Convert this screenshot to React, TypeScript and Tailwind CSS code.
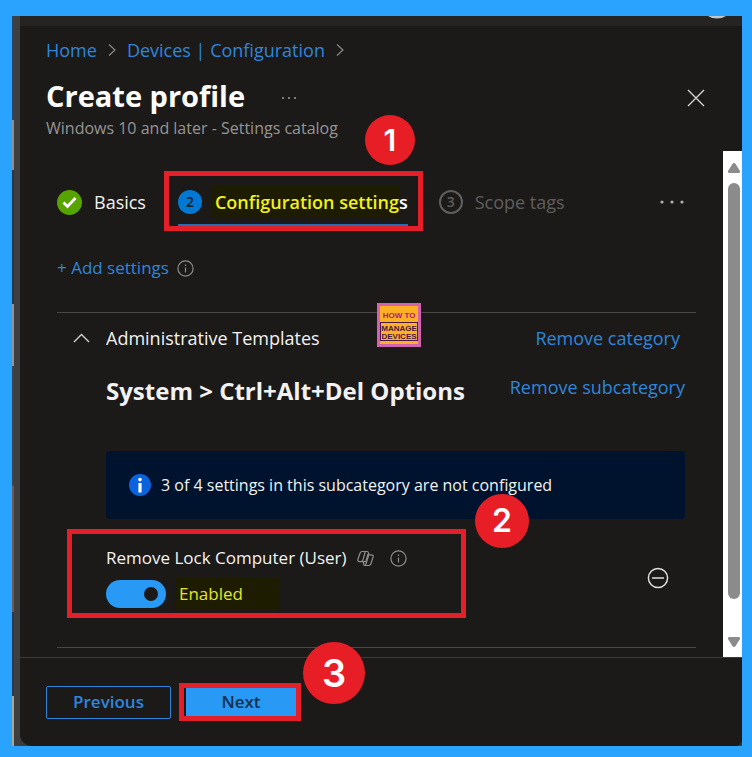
import { useState } from "react";
import type { ReactNode } from "react";

const linkClass = "text-[#2f86dc] hover:underline";

export default function App() {
	return (
		<div className="min-h-screen flex bg-[#2aa3ff] pl-3 pr-2.5 pt-4 pb-[11px] font-['Open_Sans','Noto_Sans',sans-serif] text-[#f3f2f1]">
			<div className="flex-1 min-w-0 flex bg-[#3c3c3c]">
				<DesktopEdge />
				<div className="flex-1 min-w-0 flex flex-col bg-[#1b1a19] rounded-bl-xl rounded-br-md overflow-hidden">
					<TopBar />
					<Header />
					<div className="flex-1 flex border-b border-[#3b3a39]">
						<main className="flex-1 min-w-0 pl-[37px] pr-[27px] pt-5 pb-2">
							<WizardSteps />
							<AddSettings />
							<CategorySection />
						</main>
						<ScrollTrack />
					</div>
					<Footer />
				</div>
			</div>
		</div>
	);
}

/* Sliver of the desktop behind the browser window */
function DesktopEdge() {
	return (
		<div className="w-2 flex" aria-hidden="true">
			<div className="w-0.5 flex flex-col">
				<div className="h-[104px] bg-[#27476a]" />
				<div className="h-[50px] bg-[#8b8f94]" />
				<div className="h-[134px] bg-[#27384c]" />
				<div className="h-[62px] bg-[#8f959a]" />
				<div className="h-[120px] bg-[#3a4652]" />
				<div className="h-[126px] bg-[#6b5a55]" />
				<div className="h-[84px] bg-[#263a56]" />
				<div className="flex-1 bg-[#a9a69c]" />
			</div>
			<div className="flex-1 bg-[#3f3f3f]" />
		</div>
	);
}

function TopBar() {
	return (
		<div className="h-2.5 bg-[#252423] flex justify-end pr-3.5">
			<svg width="22" height="3" viewBox="0 0 22 3" fill="#c3c7cb" aria-hidden="true">
				<path d="M2 0h18q-4 2.500-9 2.500T2 0z" />
			</svg>
		</div>
	);
}

function Header() {
	return (
		<header className="pl-[26px] pr-9 pt-3">
			<nav aria-label="Breadcrumb" className="flex items-center gap-2 h-6 text-[18px] leading-6">
				<a href="#home" className={linkClass}>
					Home
				</a>
				<Chevron />
				<a href="#configuration" className={linkClass}>
					Devices | Configuration
				</a>
				<Chevron />
			</nav>
			<div className="flex items-center pt-3.5">
				<h1 className="text-[29px] leading-10 font-bold text-white">Create profile</h1>
				<button type="button" aria-label="More actions" className="ml-9 mt-1">
					<svg width="16" height="4" viewBox="0 0 16 4" fill="#a19f9d">
						<circle cx="2" cy="2" r="1" />
						<circle cx="8" cy="2" r="1" />
						<circle cx="14" cy="2" r="1" />
					</svg>
				</button>
				<button type="button" aria-label="Close" className="ml-auto mt-1">
					<svg width="20" height="20" viewBox="0 0 20 20" fill="none" stroke="#d2d0ce" strokeWidth="1.4">
						<path d="M2 2l16 16M18 2L2 18" />
					</svg>
				</button>
			</div>
			<p className="h-[35px] text-[16px] leading-6 text-[#979593]">Windows 10 and later - Settings catalog</p>
		</header>
	);
}

function WizardSteps() {
	return (
		<div className="flex items-center pr-3 text-[18px] leading-7">
			<button type="button" className="flex items-center gap-3 pt-0.5">
				<svg width="25" height="25" viewBox="0 0 25 25" fill="none">
					<circle cx="12.5" cy="12.5" r="12.5" fill="#57a300" />
					<path d="M6.5 12.5l4 4 8-8.5" stroke="#fff" strokeWidth="2.8" />
				</svg>
				Basics
			</button>
			<div className="relative ml-[18px] border-5 border-[#e3202a] h-[60px] pl-[9px] pr-2.5 flex items-start">
				<button
					type="button"
					aria-current="step"
					className="h-[50px] pt-1 flex items-center gap-[9px] border-b-2 border-[#2a6bb5] whitespace-nowrap"
				>
					<span className="size-6 rounded-full bg-[#0078d4] text-[#14202c] text-[14px] font-semibold leading-6 text-center">
						2
					</span>
					<span className="font-semibold">
						<span className="bg-[#1d1c00] text-[#f1f11c] py-1 pl-1">Configuration setting</span>
						<span className="text-white">s</span>
					</span>
				</button>
				<StepBadge className="size-[50px] text-[30px] -top-[61px] left-[196px]">1</StepBadge>
			</div>
			<button type="button" className="ml-4 flex items-center gap-3 pt-0.5 text-[#605e5c] whitespace-nowrap">
				<span className="size-6 rounded-full border-2 border-[#605e5c] text-[14px] font-semibold leading-5 text-center">
					3
				</span>
				Scope tags
			</button>
			<button type="button" aria-label="More steps" className="ml-auto pt-0.5">
				<svg width="24" height="4" viewBox="0 0 24 4" fill="#b3b0ad">
					<circle cx="2" cy="2" r="1.6" />
					<circle cx="12" cy="2" r="1.6" />
					<circle cx="22" cy="2" r="1.6" />
				</svg>
			</button>
		</div>
	);
}

function AddSettings() {
	return (
		<div className="flex items-center gap-2 h-6 mt-[25px] text-[17px] leading-6">
			<button type="button" className={linkClass}>
				+ Add settings
			</button>
			<InfoIcon />
		</div>
	);
}

function CategorySection() {
	return (
		<section className="mt-8 border-y border-[#4a4846] relative">
			<div className="flex items-center h-[50px] pl-4 pr-4">
				<button type="button" className="flex items-center gap-4 text-[18px] leading-6">
					<svg width="17" height="10" viewBox="0 0 17 10" fill="none" stroke="#d2d0ce" strokeWidth="1.4">
						<path d="M1 9l7.5-7.5L16 9" />
					</svg>
					Administrative Templates
				</button>
				<button type="button" className={`${linkClass} ml-auto text-[18px] leading-6`}>
					Remove category
				</button>
			</div>
			<div className="pl-[49px] pr-[11px]">
				<div className="flex items-start justify-between pt-3">
					<h2 className="text-[24px] leading-8 font-bold whitespace-nowrap">System &gt; Ctrl+Alt+Del Options</h2>
					<button type="button" className={`${linkClass} text-[18px] leading-6 whitespace-nowrap`}>
						Remove subcategory
					</button>
				</div>
				<div className="mt-11 h-[68px] flex items-center gap-2.5 pl-[23px] rounded-sm bg-[#00132e] text-[16px] leading-6">
					<svg width="22" height="22" viewBox="0 0 22 22">
						<circle cx="11" cy="11" r="11" fill="#0a62dc" />
						<circle cx="11" cy="5.6" r="1.8" fill="#fff" />
						<path d="M9.4 9h3.2v9.5H9.4z" fill="#fff" />
					</svg>
					<span>3 of 4 settings in this subcategory are not configured</span>
				</div>
			</div>
			<SettingRow />
			<Logo />
		</section>
	);
}

function SettingRow() {
	const [enabled, setEnabled] = useState(true);

	return (
		<div className="mt-2.5 mb-[29px] pl-2.5 pr-[27px] flex items-center">
			<div className="relative flex-1 max-w-[399px] h-[89px] border-5 border-[#e3202a] pl-[34px] pt-3">
				<div className="flex items-center h-6 text-[17px] leading-6">
					<label htmlFor="remove-lock">Remove Lock Computer (User)</label>
					<span className="ml-2.5 mr-4">
						<CopilotIcon />
					</span>
					<InfoIcon />
				</div>
				<div className="flex items-center gap-[9px] mt-2">
					<input
						id="remove-lock"
						type="checkbox"
						role="switch"
						checked={enabled}
						onChange={(e) => setEnabled(e.target.checked)}
						className="appearance-none w-[60px] h-7 rounded-full bg-[#605e5c] checked:bg-[#2899f5] before:block before:size-3.5 before:rounded-full before:bg-[#1b1a19] before:mt-[7px] before:ml-2 checked:before:ml-[38px]"
					/>
					<span className="w-[104px] pl-1 bg-[#1d1c00] text-[#e6e626] text-[17px] leading-8">
						{enabled ? "Enabled" : "Disabled"}
					</span>
				</div>
				<StepBadge className="size-[54px] text-[32px] -top-10 left-[403px]">2</StepBadge>
			</div>
			<button type="button" aria-label="Remove setting" className="ml-auto mt-2">
				<svg width="22" height="22" viewBox="0 0 22 22" fill="none" stroke="#e1dfdd" strokeWidth="1.5">
					<circle cx="11" cy="11" r="9.6" />
					<path d="M5 11h12" />
				</svg>
			</button>
		</div>
	);
}

function Footer() {
	return (
		<footer className="flex items-center h-[88px] pl-[26px] gap-2 text-[17px] leading-6 font-semibold">
			<button type="button" className="w-[125px] h-[33px] border border-[#2f86dc] rounded-xs text-[#2f86dc]">
				Previous
			</button>
			<div className="relative border-5 border-[#e3202a] pl-0.5">
				<button type="button" className="block w-[110px] h-7 bg-[#2899f5] text-[#15304d]">
					Next
				</button>
				<StepBadge className="size-[62px] text-[38px] -top-[46px] left-[119px]">3</StepBadge>
			</div>
		</footer>
	);
}

function ScrollTrack() {
	return (
		<div className="w-[19px] bg-white flex flex-col items-center pl-0.5 pt-3 pb-2.5 gap-2.5" aria-hidden="true">
			<svg width="14" height="10" viewBox="0 0 14 10" fill="#8b8b8b">
				<path d="M7 0q1 0 1.600 1L13 8q.6 1.600-1 2H2Q.4 9.600 1 8l4.400-7Q6 0 7 0z" />
			</svg>
			<div className="w-3 flex-1 rounded-full bg-[#8b8b8b]" />
			<svg width="14" height="10" viewBox="0 0 14 10" fill="#8b8b8b" className="mt-7">
				<path d="M7 10q-1 0-1.600-1L1 2Q.4.4 2 0h10q1.600.4 1 2L8.600 9Q8 10 7 10z" />
			</svg>
		</div>
	);
}

function StepBadge({ className, children }: { className: string; children: ReactNode }) {
	return (
		<span
			className={`absolute z-10 flex items-center justify-center rounded-full bg-[#e81e26] text-white font-semibold font-['Inter','Liberation_Sans',sans-serif] ${className}`}
		>
			{children}
		</span>
	);
}

function Chevron() {
	return (
		<svg width="14" height="14" viewBox="0 0 14 14" fill="none" stroke="#8a8886" strokeWidth="1.2">
			<path d="M4 1.500l6 5.500-6 5.500" />
		</svg>
	);
}

function InfoIcon() {
	return (
		<svg width="17" height="17" viewBox="0 0 17 17" fill="none" stroke="#8f8d8b" strokeWidth="1.2">
			<circle cx="8.500" cy="8.500" r="7.600" />
			<path d="M8.500 7.500v5M8.500 4.500v1.400" />
		</svg>
	);
}

function CopilotIcon() {
	return (
		<svg width="17" height="17" viewBox="0 0 17 17" fill="none" stroke="#8f8d8b" strokeWidth="1.2" strokeLinejoin="round">
			<path d="M11.800 4.800l-.4-2.200c-.1-.7-.6-1.100-1.300-1.100H5.200c-1 0-1.800.6-2.100 1.500L.9 9.300c-.4 1.300.3 2.300 1.600 2.300h4" />
			<path d="M8.200 1.500L6 9.800c-.3 1.200-1.200 1.800-2.400 1.800" />
			<path d="M9.800 4.800h4.700c1.300 0 2 1 1.600 2.200l-2.200 6.800c-.3 1-1.100 1.700-2.200 1.700H7.900c-.8 0-1.300-.4-1.300-1.200l-.1-2.700h2.300l1.900-6.800" />
			<path d="M11.800 4.800L9.300 13c-.3 1-.8 1.800-1.600 2.300" />
		</svg>
	);
}

function Logo() {
	return (
		<svg
			className="absolute -top-2.5 left-1/2 font-['Liberation_Sans',sans-serif]"
			width="44"
			height="44"
			viewBox="0 0 44 44"
			role="img"
			aria-label="How to manage devices"
		>
			<rect width="44" height="44" fill="#d163b0" />
			<rect x="3" y="3" width="38" height="38" fill="#fdb022" />
			<g fontWeight="bold" textAnchor="middle">
				<text x="22" y="15" fontSize="8" fill="#b6118e">
					HOW TO
				</text>
				<rect x="3.500" y="19.500" width="37" height="18" fill="none" stroke="#4b1748" />
				<text x="22" y="28" fontSize="8" fill="#4b1748">
					MANAGE
				</text>
				<text x="22" y="36" fontSize="8" fill="#4b1748">
					DEVICES
				</text>
			</g>
		</svg>
	);
}
